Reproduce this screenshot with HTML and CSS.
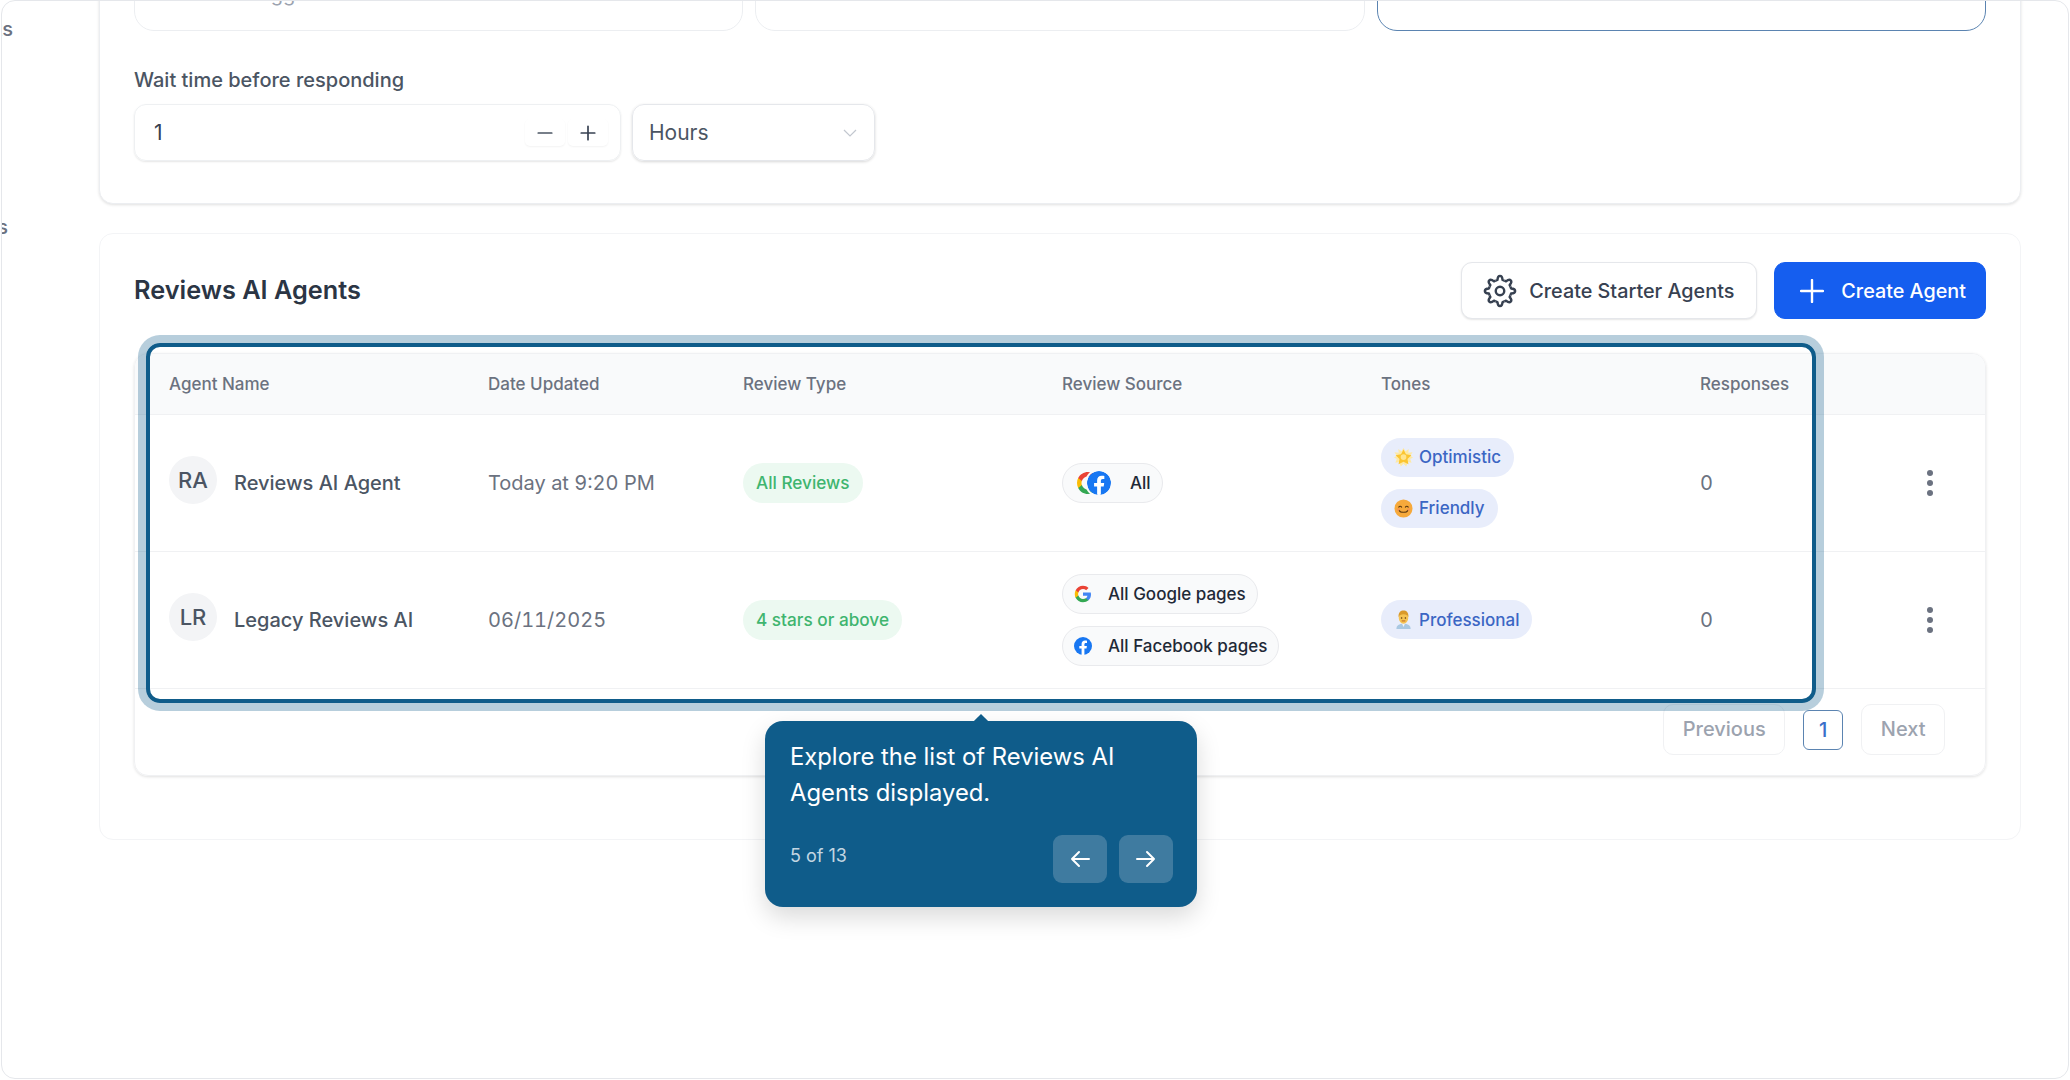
FILE: index.html
```html
<!DOCTYPE html>
<html lang="en">
<head>
    <meta charset="UTF-8">
    <meta name="viewport" content="width=device-width, initial-scale=1.0">
    <title>Reviews AI Agents</title>
    <link rel="stylesheet" href="styles.css">
</head>
<body>
    <div class="window">
        <aside class="side">
            <div class="side-label"><span>Agents</span></div>
            <div class="side-label side-label-short"><span>Settings</span></div>
        </aside>

        <main class="main">
            <section class="card settings-card">
                <div class="options">
                    <div class="option"><span class="option-text">Suggestions</span></div>
                    <div class="option"></div>
                    <div class="option option-active"></div>
                </div>
                <div class="field-label">Wait time before responding</div>
                <div class="wait-row">
                    <div class="number-input">
                        <span>1</span>
                        <div class="stepper">
                            <button class="step-btn">
                                <svg viewBox="0 0 16 16" width="18" height="18"><path d="M2 8h12" stroke="#4b5563" stroke-width="1.5" stroke-linecap="round"/></svg>
                            </button>
                            <button class="step-btn">
                                <svg viewBox="0 0 16 16" width="18" height="18"><path d="M2 8h12M8 2v12" stroke="#374151" stroke-width="1.5" stroke-linecap="round"/></svg>
                            </button>
                        </div>
                    </div>
                    <div class="select-box">
                        <span>Hours</span>
                        <svg viewBox="0 0 14 8" width="14" height="8"><path d="M1 1l6 6 6-6" fill="none" stroke="#c2c7cf" stroke-width="1.2"/></svg>
                    </div>
                </div>
            </section>

            <section class="card agents-card">
                <div class="agents-head">
                    <h2>Reviews AI Agents</h2>
                    <div class="head-buttons">
                        <button class="btn btn-light">
                            <svg viewBox="0 0 24 24" width="34" height="34" fill="none" stroke="#374151" stroke-width="1.7" stroke-linejoin="round">
                                <circle cx="12" cy="12" r="3"/>
                                <path d="M8.94 4.61 10.2 4.21C10.3 2.5 10.6 1.3 12 1.3S13.7 2.5 13.8 4.21L15.06 4.61"/>
                                <path transform="rotate(45 12 12)" d="M8.94 4.61 10.2 4.21C10.3 2.5 10.6 1.3 12 1.3S13.7 2.5 13.8 4.21L15.06 4.61"/>
                                <path transform="rotate(90 12 12)" d="M8.94 4.61 10.2 4.21C10.3 2.5 10.6 1.3 12 1.3S13.7 2.5 13.8 4.21L15.06 4.61"/>
                                <path transform="rotate(135 12 12)" d="M8.94 4.61 10.2 4.21C10.3 2.5 10.6 1.3 12 1.3S13.7 2.5 13.8 4.21L15.06 4.61"/>
                                <path transform="rotate(180 12 12)" d="M8.94 4.61 10.2 4.21C10.3 2.5 10.6 1.3 12 1.3S13.7 2.5 13.8 4.21L15.06 4.61"/>
                                <path transform="rotate(225 12 12)" d="M8.94 4.61 10.2 4.21C10.3 2.5 10.6 1.3 12 1.3S13.7 2.5 13.8 4.21L15.06 4.61"/>
                                <path transform="rotate(270 12 12)" d="M8.94 4.61 10.2 4.21C10.3 2.5 10.6 1.3 12 1.3S13.7 2.5 13.8 4.21L15.06 4.61"/>
                                <path transform="rotate(315 12 12)" d="M8.94 4.61 10.2 4.21C10.3 2.5 10.6 1.3 12 1.3S13.7 2.5 13.8 4.21L15.06 4.61"/>
                            </svg>
                            Create Starter Agents
                        </button>
                        <button class="btn btn-primary">
                            <svg viewBox="0 0 24 24" width="24" height="24"><path d="M12 1v22M1 12h22" stroke="#fff" stroke-width="2.4" stroke-linecap="round"/></svg>
                            Create Agent
                        </button>
                    </div>
                </div>

                <div class="table-card">
                    <table class="agents-table">
                        <colgroup>
                            <col class="col-wide">
                            <col class="col-date">
                            <col class="col-wide">
                            <col class="col-wide">
                            <col class="col-wide">
                            <col class="col-count">
                            <col class="col-menu">
                        </colgroup>
                        <thead>
                            <tr>
                                <th>Agent Name</th>
                                <th>Date Updated</th>
                                <th>Review Type</th>
                                <th>Review Source</th>
                                <th>Tones</th>
                                <th>Responses</th>
                                <th></th>
                            </tr>
                        </thead>
                        <tbody>
                            <tr>
                                <td>
                                    <div class="agent">
                                        <span class="avatar">RA</span>
                                        <span class="agent-name">Reviews AI Agent</span>
                                    </div>
                                </td>
                                <td class="muted">Today at 9:20 PM</td>
                                <td><span class="badge-green">All Reviews</span></td>
                                <td>
                                    <div class="stack">
                                        <span class="chip chip-all">
                                            <span class="icon-pair">
                                                <svg class="logo-lg" viewBox="0 0 24 24"><use href="#google"/></svg>
                                                <svg class="logo-lg logo-over" viewBox="0 0 24 24"><use href="#facebook"/></svg>
                                            </span>
                                            All
                                        </span>
                                    </div>
                                </td>
                                <td>
                                    <div class="stack">
                                        <span class="tone">
                                            <svg class="emoji" viewBox="0 0 20 20"><use href="#star"/></svg>
                                            Optimistic
                                        </span>
                                        <span class="tone">
                                            <svg class="emoji" viewBox="0 0 20 20"><use href="#smile"/></svg>
                                            Friendly
                                        </span>
                                    </div>
                                </td>
                                <td class="muted">0</td>
                                <td class="menu-cell"><div class="kebab"><i></i><i></i><i></i></div></td>
                            </tr>
                            <tr>
                                <td>
                                    <div class="agent">
                                        <span class="avatar">LR</span>
                                        <span class="agent-name">Legacy Reviews AI</span>
                                    </div>
                                </td>
                                <td class="muted">06/11/2025</td>
                                <td><span class="badge-green">4 stars or above</span></td>
                                <td>
                                    <div class="stack">
                                        <span class="chip">
                                            <svg class="logo" viewBox="0 0 24 24"><use href="#google"/></svg>
                                            All Google pages
                                        </span>
                                        <span class="chip">
                                            <svg class="logo" viewBox="0 0 24 24"><use href="#facebook"/></svg>
                                            All Facebook pages
                                        </span>
                                    </div>
                                </td>
                                <td>
                                    <div class="stack">
                                        <span class="tone">
                                            <svg class="emoji" viewBox="0 0 20 20"><use href="#worker"/></svg>
                                            Professional
                                        </span>
                                    </div>
                                </td>
                                <td class="muted">0</td>
                                <td class="menu-cell"><div class="kebab"><i></i><i></i><i></i></div></td>
                            </tr>
                        </tbody>
                    </table>
                    <div class="pager">
                        <span class="page-btn">Previous</span>
                        <span class="page-num">1</span>
                        <span class="page-btn">Next</span>
                    </div>
                </div>
            </section>
        </main>

        <!-- tour overlay -->
        <div class="tour-ring"></div>
        <div class="tour-tip">
            <p>Explore the list of Reviews AI Agents displayed.</p>
            <div class="tour-foot">
                <span class="tour-count">5 of 13</span>
                <div class="tour-nav">
                    <button class="tour-btn">
                        <svg viewBox="0 0 24 24" width="24" height="24" fill="none" stroke="#fff" stroke-width="2" stroke-linecap="round" stroke-linejoin="round"><path d="M21 12H4M11 5l-7 7 7 7"/></svg>
                    </button>
                    <button class="tour-btn">
                        <svg viewBox="0 0 24 24" width="24" height="24" fill="none" stroke="#fff" stroke-width="2" stroke-linecap="round" stroke-linejoin="round"><path d="M3 12h17M13 5l7 7-7 7"/></svg>
                    </button>
                </div>
            </div>
        </div>
    </div>

    <!-- shared icons -->
    <svg class="defs" width="0" height="0">
        <defs>
            <g id="google">
                <path fill="#4285F4" d="M22.56 12.25c0-.78-.07-1.53-.2-2.25H12v4.26h5.92c-.26 1.37-1.04 2.53-2.08 3.31v2.77h3.57c2.08-1.92 3.28-4.74 3.28-8.09z"/>
                <path fill="#34A853" d="M12 23c2.97 0 5.46-.98 7.28-2.66l-3.57-2.77c-.98.66-2.23 1.06-3.71 1.06-2.86 0-5.29-1.93-6.16-4.53H2.18v2.84C3.99 20.53 7.7 23 12 23z"/>
                <path fill="#FBBC05" d="M5.84 14.09c-.22-.66-.35-1.36-.35-2.09s.13-1.43.35-2.09V7.07H2.18C1.43 8.55 1 10.22 1 12s.43 3.45 1.18 4.93l2.85-2.22.81-.62z"/>
                <path fill="#EA4335" d="M12 5.38c1.62 0 3.06.56 4.21 1.64l3.15-3.15C17.45 2.09 14.97 1 12 1 7.7 1 3.99 3.47 2.18 7.07l3.66 2.84c.87-2.6 3.3-4.53 6.16-4.53z"/>
            </g>
            <g id="facebook">
                <circle cx="12" cy="12" r="12" fill="#1877f2"/>
                <path fill="#fff" d="M16.67 15.47 17.2 12h-3.33V9.75c0-.95.47-1.87 1.96-1.87h1.51V4.93s-1.37-.23-2.69-.23c-2.74 0-4.53 1.66-4.53 4.66V12H7.08v3.47h3.04v8.39a12.1 12.1 0 0 0 3.75 0v-8.39z"/>
            </g>
            <g id="star">
                <path fill="#fde9a6" d="M10 0l2.200 3.400L15.500 1l-.4 4 4.400-.4-2.400 3.500L20 10l-2.900 1.500 1.400 4-4-.8-1.600 4.800-2.900-3-2.900 3-1.600-4.800-4 .8 1.400-4L0 10l2.900-1.900-2.400-3.500 4.400.4-.4-4 3.300 2.400z"/>
                <path fill="#fbc531" d="M10 1.500l2.600 5.200 5.700.8-4.100 4 1 5.700-5.200-2.700-5.200 2.700 1-5.700-4.100-4 5.700-.8z"/>
                <circle cx="10" cy="9.500" r="3" fill="#ffe58f"/>
            </g>
            <g id="smile">
                <circle cx="10" cy="10" r="9.500" fill="#f6a93b"/>
                <path d="M5 8.500c.8-1.200 2.200-1.200 3 0M12 8.500c.8-1.200 2.200-1.200 3 0" fill="none" stroke="#5d3a10" stroke-width="1.200" stroke-linecap="round"/>
                <path d="M5.500 12c1.200 2.600 7.800 2.600 9 0" fill="none" stroke="#5d3a10" stroke-width="1.200" stroke-linecap="round"/>
                <circle cx="4.500" cy="11" r="1.500" fill="#f58b5a" opacity=".6"/>
                <circle cx="15.500" cy="11" r="1.500" fill="#f58b5a" opacity=".6"/>
            </g>
            <g id="worker">
                <path d="M2.500 20c0-4 3-5.500 7.500-5.500s7.500 1.500 7.500 5.500z" fill="#a9c8e2"/>
                <path d="M8.500 14.500h3L10 18z" fill="#f3f4f6"/>
                <ellipse cx="10" cy="8.500" rx="5" ry="6" fill="#f6c453"/>
                <path d="M4.800 7.500C4.500 2.500 7 .5 10 .5s5.500 2 5.200 7c-1-2-2.500-3-5.200-3s-4.200 1-5.200 3z" fill="#d99a2b"/>
                <circle cx="8" cy="8.500" r=".8" fill="#5d3a10"/>
                <circle cx="12" cy="8.500" r=".8" fill="#5d3a10"/>
                <path d="M8.500 11.500h3" stroke="#b4571f" stroke-width=".9" stroke-linecap="round"/>
            </g>
        </defs>
    </svg>
</body>
</html>
```

FILE: styles.css
```css
* {
    box-sizing: border-box;
}

body {
    font-family: Inter, "Liberation Sans", sans-serif;
    background-color: #fff;
    margin: 0;
    padding: 0;
    color: #374151;
}

button {
    font-family: inherit;
    cursor: pointer;
}

.defs {
    display: block;
    height: 0;
}

.window {
    position: relative;
    display: flex;
    width: 2068px;
    height: 1079px;
    margin-left: 1px;
    border: 1px solid #e5e7eb;
    border-radius: 14px;
    overflow: hidden;
    background: #fff;
}

/* Sidebar is scrolled almost out of view */
.side {
    flex: 0 0 97px;
    display: flex;
    flex-direction: column;
    gap: 174px;
    padding-top: 16px;
}

.side-label {
    display: flex;
    justify-content: flex-end;
    width: 11px;
    height: 24px;
    overflow: hidden;
    font-size: 20px;
    line-height: 24px;
    font-weight: 500;
    color: #6b7280;
    white-space: nowrap;
}

.side-label-short {
    width: 6px;
}

.main {
    flex: 0 0 1922px;
}

.card {
    background: #fff;
    border: 1px solid #f3f4f6;
    border-radius: 14px;
}

.settings-card {
    margin-top: -91px;
    padding: 20px 34px 42px;
    border-color: #eceef1;
    box-shadow: 0 1px 3px rgba(0, 0, 0, 0.12);
}

.options {
    display: grid;
    grid-template-columns: repeat(3, 1fr);
    gap: 12px;
}

.option {
    height: 100px;
    padding: 50px 0 0 111px;
    border: 1px solid #eceef1;
    border-radius: 20px;
}

.option-active {
    border-color: #5b84b1;
}

.option-text {
    font-size: 20px;
    line-height: 24px;
    color: #9ca3af;
}

.field-label {
    margin-top: 37px;
    font-size: 20px;
    line-height: 24px;
    font-weight: 500;
    color: #4b5563;
}

.wait-row {
    display: flex;
    gap: 11px;
    margin-top: 12px;
}

.number-input {
    display: flex;
    align-items: center;
    justify-content: space-between;
    width: 487px;
    height: 57px;
    padding: 0 12px 0 19px;
    border: 1px solid #eef0f2;
    border-radius: 12px;
    box-shadow: 0 1px 2px rgba(0, 0, 0, 0.1);
    font-size: 21px;
    color: #374151;
}

.stepper {
    display: flex;
    gap: 3px;
}

.step-btn {
    display: flex;
    align-items: center;
    justify-content: center;
    width: 40px;
    height: 27px;
    padding: 0;
    border: none;
    border-radius: 5px;
    background: #fff;
    box-shadow: 0 1px 2px rgba(0, 0, 0, 0.05);
}

.select-box {
    display: flex;
    align-items: center;
    justify-content: space-between;
    width: 243px;
    height: 57px;
    padding: 0 17px 0 16px;
    border: 1px solid #e5e7eb;
    border-radius: 12px;
    box-shadow: 0 1px 3px rgba(0, 0, 0, 0.16);
    font-size: 21px;
    color: #4b5563;
}

.agents-card {
    height: 607px;
    margin-top: 29px;
    padding: 28px 34px 0;
}

.agents-head {
    display: flex;
    align-items: center;
    justify-content: space-between;
    margin-bottom: 34px;
}

.agents-head h2 {
    margin: 0 0 2px;
    font-size: 25.3px;
    font-weight: 600;
    color: #2b3544;
}

.head-buttons {
    display: flex;
    gap: 17px;
}

.btn {
    display: flex;
    align-items: center;
    height: 57px;
    border-radius: 11px;
    font-size: 19.8px;
    font-weight: 500;
}

.btn-light {
    gap: 12px;
    padding: 0 22px 0 21px;
    background: #fff;
    border: 1px solid #e5e7eb;
    box-shadow: 0 1px 2px rgba(0, 0, 0, 0.1);
    color: #374151;
}

.btn-primary {
    gap: 17px;
    padding: 0 19px 0 25px;
    background: #155eef;
    border: 1px solid #155eef;
    color: #fff;
}

.table-card {
    border: 1px solid #f0f1f3;
    border-radius: 14px;
    box-shadow: 0 1px 3px rgba(0, 0, 0, 0.12);
    overflow: hidden;
}

.agents-table {
    width: 100%;
    table-layout: fixed;
    border-collapse: collapse;
}

.col-wide {
    width: 319px;
}

.col-date {
    width: 255px;
}

.col-count {
    width: 200px;
}

.col-menu {
    width: 119px;
}

.agents-table th {
    height: 60px;
    padding: 0 0 0 34px;
    background: #f9fafb;
    border-bottom: 1px solid #f0f1f3;
    text-align: left;
    font-size: 17px;
    font-weight: 500;
    color: #6b7280;
}

.agents-table td {
    height: 137px;
    padding: 0 0 0 34px;
    border-bottom: 1px solid #f0f1f3;
    font-size: 20px;
}

.muted {
    color: #6b7280;
    font-variant-numeric: tabular-nums;
}

.agent {
    display: flex;
    align-items: center;
    gap: 17px;
}

.avatar {
    display: flex;
    align-items: center;
    justify-content: center;
    width: 48px;
    height: 48px;
    margin-bottom: 6px;
    border-radius: 50%;
    background: #f3f4f6;
    font-size: 22px;
    font-weight: 500;
    color: #4b5563;
}

.agent-name {
    font-weight: 500;
    color: #4b5563;
}

.badge-green {
    display: inline-block;
    height: 40px;
    padding: 0 13px;
    border-radius: 20px;
    background: #ecf9f1;
    font-size: 17.2px;
    font-weight: 500;
    line-height: 40px;
    color: #3fb56f;
}

.stack {
    display: flex;
    flex-direction: column;
    align-items: flex-start;
    gap: 12px;
}

.chip {
    display: flex;
    align-items: center;
    gap: 16px;
    height: 40px;
    padding: 0 11px;
    border: 1px solid #e9eaed;
    border-radius: 20px;
    background: #f9fafb;
    font-size: 17px;
    font-weight: 500;
    color: #1f2937;
}

.chip-all {
    gap: 19px;
    padding: 0 11px 0 13px;
}

.logo {
    width: 18px;
    height: 18px;
}

.icon-pair {
    display: flex;
}

.logo-lg {
    width: 24px;
    height: 24px;
}

.logo-over {
    margin-left: -13px;
    border-radius: 50%;
    box-shadow: 0 0 0 2px #f9fafb;
}

.tone {
    display: flex;
    align-items: center;
    gap: 6px;
    height: 39px;
    padding: 0 13px;
    border-radius: 20px;
    background: #e8edfb;
    font-size: 17px;
    font-weight: 500;
    color: #3b66c4;
}

.emoji {
    width: 19px;
    height: 19px;
}

.agents-table td.menu-cell {
    padding-left: 61px;
}

.kebab {
    display: flex;
    flex-direction: column;
    gap: 4px;
    width: 6px;
}

.kebab i {
    width: 6px;
    height: 6px;
    border-radius: 50%;
    background: #6b7280;
}

.pager {
    display: flex;
    align-items: flex-start;
    justify-content: flex-end;
    gap: 18px;
    height: 86px;
    padding: 15px 40px 0 0;
    font-size: 20px;
    font-weight: 500;
    color: #9ca3af;
}

.page-btn {
    height: 51px;
    padding: 0 18.5px;
    border: 1px solid #f0f1f3;
    border-radius: 10px;
    line-height: 49px;
}

.page-num {
    width: 40px;
    height: 40px;
    margin-top: 6px;
    border: 1px solid #5b84b1;
    border-radius: 6px;
    text-align: center;
    line-height: 38px;
    color: #3b6fc9;
}

/* Tour highlight sits over the table */
.tour-ring {
    position: absolute;
    left: 144px;
    top: 342px;
    width: 1670px;
    height: 360px;
    border: 4px solid #0f5c8a;
    border-radius: 14px;
    box-shadow: 0 0 0 8px rgba(15, 92, 138, 0.3);
    pointer-events: none;
}

.tour-tip {
    position: absolute;
    left: 763px;
    top: 720px;
    width: 432px;
    height: 186px;
    padding: 18px 24px 24px 25px;
    border-radius: 18px;
    background: #0f5c8a;
    box-shadow: 0 10px 25px rgba(0, 0, 0, 0.15);
    color: #fff;
}

.tour-tip::before {
    content: "";
    position: absolute;
    left: 211px;
    top: -5px;
    width: 10px;
    height: 10px;
    background: #0f5c8a;
    transform: rotate(45deg);
}

.tour-tip p {
    margin: 0;
    font-size: 23.8px;
    line-height: 36px;
}

.tour-foot {
    display: flex;
    justify-content: space-between;
    margin-top: 24px;
}

.tour-count {
    margin-top: 10px;
    font-size: 18px;
    line-height: 22px;
    color: #c3d6e2;
}

.tour-nav {
    display: flex;
    gap: 12px;
}

.tour-btn {
    display: flex;
    align-items: center;
    justify-content: center;
    width: 54px;
    height: 48px;
    padding: 0;
    border: none;
    border-radius: 9px;
    background: #3f7ba0;
}
```
